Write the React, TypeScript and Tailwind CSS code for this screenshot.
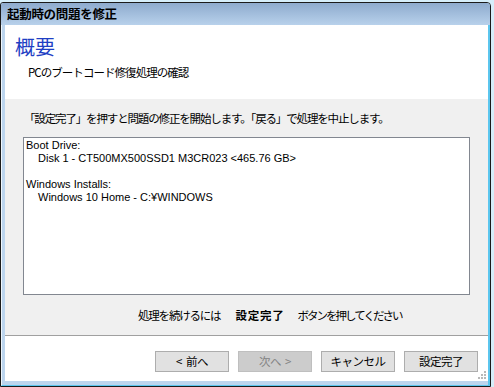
import React from "react";

const JP = { fontFamily: '"Noto Sans CJK JP", "Noto Sans", sans-serif' };
const LAT = { fontFamily: '"Liberation Sans", "Noto Sans CJK JP", sans-serif' };

function Btn({ children, disabled }: { children: React.ReactNode; disabled?: boolean }) {
  return (
    <div
      className={
        disabled
          ? "w-[74px] h-[21px] border border-[#bfbfbf] bg-[#cccccc] text-[#838383] flex items-center justify-center text-[11.5px] tracking-[-0.5px] whitespace-pre"
          : "w-[74px] h-[21px] border border-[#adadad] bg-[#e1e1e1] text-black flex items-center justify-center text-[11.5px] tracking-[-0.5px] whitespace-pre"
      }
      style={JP}
    >
      {children}
    </div>
  );
}

export default function App() {
  return (
    <div className="w-[494px] h-[387px] bg-[#d6eefa] overflow-hidden pt-[2px]">
      <div className="w-[491px] h-[385px] border border-[#1b1b1b] rounded-tr-[4px] rounded-tl-[3px] flex flex-col overflow-hidden">
        <div
          className="h-[22px] shrink-0 bg-gradient-to-b from-[#8eabce] to-[#b8d1eb] flex items-center pl-[6px] text-[12.5px] font-bold text-black tracking-[-0.3px]"
          style={JP}
        >
          起動時の問題を修正
        </div>
        <div className="flex-1 flex flex-col bg-[#bcd5ee] pl-[3px] border-l border-l-[#eef6fd] border-r-2 border-r-[#5cc6ee] border-b border-b-[#5cc6ee]">
          <div className="flex-1 flex flex-col bg-white mb-[4px]">
            <div className="h-[74px] shrink-0 bg-white pt-[10px] pl-[10px]">
              <div className="text-[20px] leading-[24px] text-[#1f3fc4]" style={JP}>
                概要
              </div>
              <div className="mt-[6px] pl-[13px] text-[11.5px] leading-[14px] text-black tracking-[-0.95px]" style={JP}>
                PCのブートコード修復処理の確認
              </div>
            </div>
            <div className="flex-1 bg-[#f0f0f0] px-[18px] pt-[12px] border-b border-b-[#a0a0a0] flex flex-col">
              <div className="h-[14px] leading-[14px] text-[11.5px] text-black tracking-[-1.15px] pl-[1px]" style={JP}>
                「設定完了」を押すと問題の修正を開始します。「戻る」で処理を中止します。
              </div>
              <div
                className="mt-[12px] h-[158px] bg-white border border-[#828790] pl-[2px] pt-[1px] text-[11px] leading-[13px] text-black"
                style={LAT}
              >
                <div>Boot Drive:</div>
                <div className="pl-[12px]">Disk 1 - CT500MX500SSD1 M3CR023 &lt;465.76 GB&gt;</div>
                <div className="h-[13px]" />
                <div>Windows Installs:</div>
                <div className="pl-[12px]">Windows 10 Home - C:¥WINDOWS</div>
              </div>
              <div className="mt-[13px] h-[14px] leading-[14px] flex items-center pl-[115px] text-[11.5px] text-black" style={JP}>
                <span className="tracking-[-1.2px]">処理を続けるには</span>
                <span className="ml-[15px] font-bold tracking-[0.8px]">設定完了</span>
                <span className="ml-[13px] tracking-[-2px]">ボタンを押してください</span>
              </div>
            </div>
            <div className="h-[45px] shrink-0 bg-white relative flex items-start pt-[15px] pl-[150px] gap-[9px]">
              <Btn>{"<  前へ"}</Btn>
              <Btn disabled>{"次へ  >"}</Btn>
              <Btn>キャンセル</Btn>
              <Btn>設定完了</Btn>
              <svg className="absolute right-[1px] bottom-[1px]" width="10" height="10" viewBox="0 0 10 10">
                <g fill="#b8b8b8">
                  <rect x="7" y="1" width="2" height="2" />
                  <rect x="4" y="4" width="2" height="2" />
                  <rect x="7" y="4" width="2" height="2" />
                  <rect x="1" y="7" width="2" height="2" />
                  <rect x="4" y="7" width="2" height="2" />
                  <rect x="7" y="7" width="2" height="2" />
                </g>
              </svg>
            </div>
          </div>
        </div>
      </div>
    </div>
  );
}
